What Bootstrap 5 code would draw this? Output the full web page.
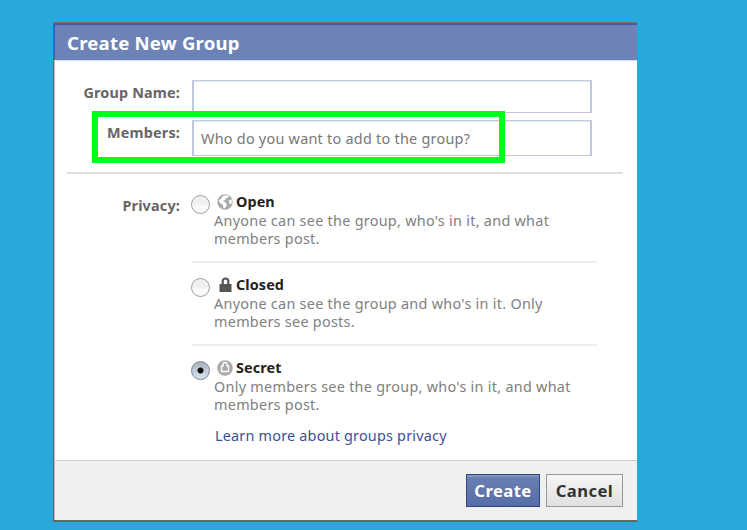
<!DOCTYPE html>
<html lang="en">
<head>
<meta charset="utf-8">
<meta name="viewport" content="width=device-width, initial-scale=1">
<title>Create New Group</title>
<link href="https://cdn.jsdelivr.net/npm/bootstrap@5.3.0/dist/css/bootstrap.min.css" rel="stylesheet">
<style>
body{background:#2aa7db;font-family:"Noto Sans","Open Sans",sans-serif;font-size:14.4px;line-height:18.4px;color:#808080;height:530px;overflow:hidden}
.dialog{width:584px;height:500px;margin:22px 0 0 53px;background:#fff;border:solid #666;border-width:1px 0 2px 1px;border-top-color:#83716f;box-shadow:inset 1px 0 #bbb}
.dialog-head{height:38px;background:#6d82b6;border-top:1px solid #52607f;box-shadow:inset 0 1px #3f5aa2,inset 1px 0 #3f5aa2;border-bottom:1px solid #d5dbe9;color:#fff;font-size:18.6px;font-weight:700;line-height:37px;padding-left:13px;letter-spacing:.2px}
.fields{height:113px;padding-top:19px;margin:0 14px 0 13px;border-bottom:2px solid #dfdfdf}
.field-label{width:113px;font-weight:700;color:#666;text-align:right;letter-spacing:.17px}
.field-box{width:400px;border:solid #bfc8dd;border-width:1px 2px;border-radius:0;background:#fff;color:#777;padding:0 7px;font:inherit;letter-spacing:.26px;box-shadow:inset 0 1px #e5e9f2}
.field-box::placeholder{color:#777;opacity:1}
.field-box:focus{box-shadow:none}
.name-row{margin-bottom:7px}
.name-box{height:33px}.member-box{height:36px}
.highlight{left:92px;top:111px;width:413px;height:52px;border:6px solid #00ff1c;pointer-events:none}
.privacy{height:286px;padding:19px 0 0 13px}
.options{width:405px;margin-left:12px}
.option{height:83px;border-bottom:2px solid #eee;padding-top:13px}
.option:first-child{height:70px;padding-top:0}
.option:last-of-type{border:0;height:81px}
.option-radio{appearance:none;width:19px;height:19px;border:1.5px solid #a0a0a0;border-radius:50%;background:linear-gradient(#f0f0f0 45%,#fafafa 60%);margin:2px 4px 0 -1px;flex:none}
.option-radio:checked{border-color:#7b8490;background:radial-gradient(circle,#111 0 2.6px,transparent 3.4px),linear-gradient(#a7b1bd,#d8e5f0)}
.option-name{color:#222;font-weight:700;height:18px;letter-spacing:.1px}
.option-name svg{width:16px;height:16px;margin:1px 3px 0 3px}
.option-text{letter-spacing:.28px;white-space:nowrap;padding-top:1px}
.learn{color:#3b4f96;text-decoration:none;margin-left:23px;letter-spacing:.21px}
.dialog-foot{height:60px;background:#f0f0f0;border-top:1px solid #ccc;padding:13px 14px 0 0;gap:6px;box-shadow:inset 1px 0 #bbb}
.action{height:33px;border-radius:0;padding:0;font-size:16.6px;font-weight:700;line-height:30px;letter-spacing:.45px}
.action-create{width:74px;color:#fff;background:linear-gradient(#6b80b4,#586da8);border:1px solid #2f4684;box-shadow:inset 0 2px #8494c1}
.action-cancel{width:77px;color:#333;background:linear-gradient(#f6f6f6,#e0e0e0);border:1px solid #999}
</style>
<script src="https://cdn.jsdelivr.net/npm/bootstrap@5.3.0/dist/js/bootstrap.bundle.min.js"></script>
</head>
<body class="position-relative d-flex align-items-start">
<main class="dialog d-flex flex-column">
  <h1 class="dialog-head m-0 flex-shrink-0">Create New Group</h1>
  <section class="fields flex-shrink-0">
    <div class="name-row d-flex gap-2"><label class="field-label pt-1" for="gname">Group Name:</label><input id="gname" class="form-control field-box name-box ms-1" type="text"></div>
    <div class="d-flex gap-2"><label class="field-label pt-1" for="members">Members:</label><input id="members" class="form-control field-box member-box ms-1" type="text" placeholder="Who do you want to add to the group?"></div>
  </section>
  <section class="privacy d-flex flex-shrink-0">
    <div class="field-label pt-1">Privacy:</div>
    <div class="options">
      <div class="option d-flex">
        <input class="option-radio" type="radio" name="privacy" id="open">
        <div><label for="open" class="option-name d-flex"><svg viewBox="0 0 16 16"><circle cx="8" cy="8" r="7.7" fill="#aaa"/><path fill="#fff" d="M7 1.500l4-.2 1 1.700-2.500 1L8 6 6 7l2.500 1.500L10 11l-2 3-1.500.5L6 11 3 9 1.500 6 4 5l1-2zM12 6l2.500-.5L15 9l-2 1.500L12 8z"/></svg>Open</label>
        <div class="option-text">Anyone can see the group, who's in it, and what<br>members post.</div></div>
      </div>
      <div class="option d-flex">
        <input class="option-radio" type="radio" name="privacy" id="closed">
        <div><label for="closed" class="option-name d-flex"><svg viewBox="0 0 16 16"><path d="M5.700 8V4.300a2.800 2.800 0 0 1 5.600 0V8" fill="none" stroke="#555" stroke-width="2.200"/><path d="M2.500 7h12v8h-12z" fill="#555"/></svg>Closed</label>
        <div class="option-text">Anyone can see the group and who's in it. Only<br>members see posts.</div></div>
      </div>
      <div class="option d-flex">
        <input class="option-radio" type="radio" name="privacy" id="secret" checked>
        <div><label for="secret" class="option-name d-flex"><svg viewBox="0 0 16 16"><circle cx="8" cy="8" r="7.8" fill="#aaa"/><path d="M4.500 6H6V4.500a2 2 0 0 1 4 0V6h1.500v5.500h-7z" fill="none" stroke="#fff" stroke-width="1.400"/></svg>Secret</label>
        <div class="option-text">Only members see the group, who's in it, and what<br>members post.</div></div>
      </div>
      <a class="learn d-block" href="#">Learn more about groups privacy</a>
    </div>
  </section>
  <footer class="dialog-foot d-flex justify-content-end flex-shrink-0">
    <button class="btn action action-create" type="button">Create</button>
    <button class="btn action action-cancel" type="button">Cancel</button>
  </footer>
</main>
<div class="highlight position-absolute"></div>
</body>
</html>
